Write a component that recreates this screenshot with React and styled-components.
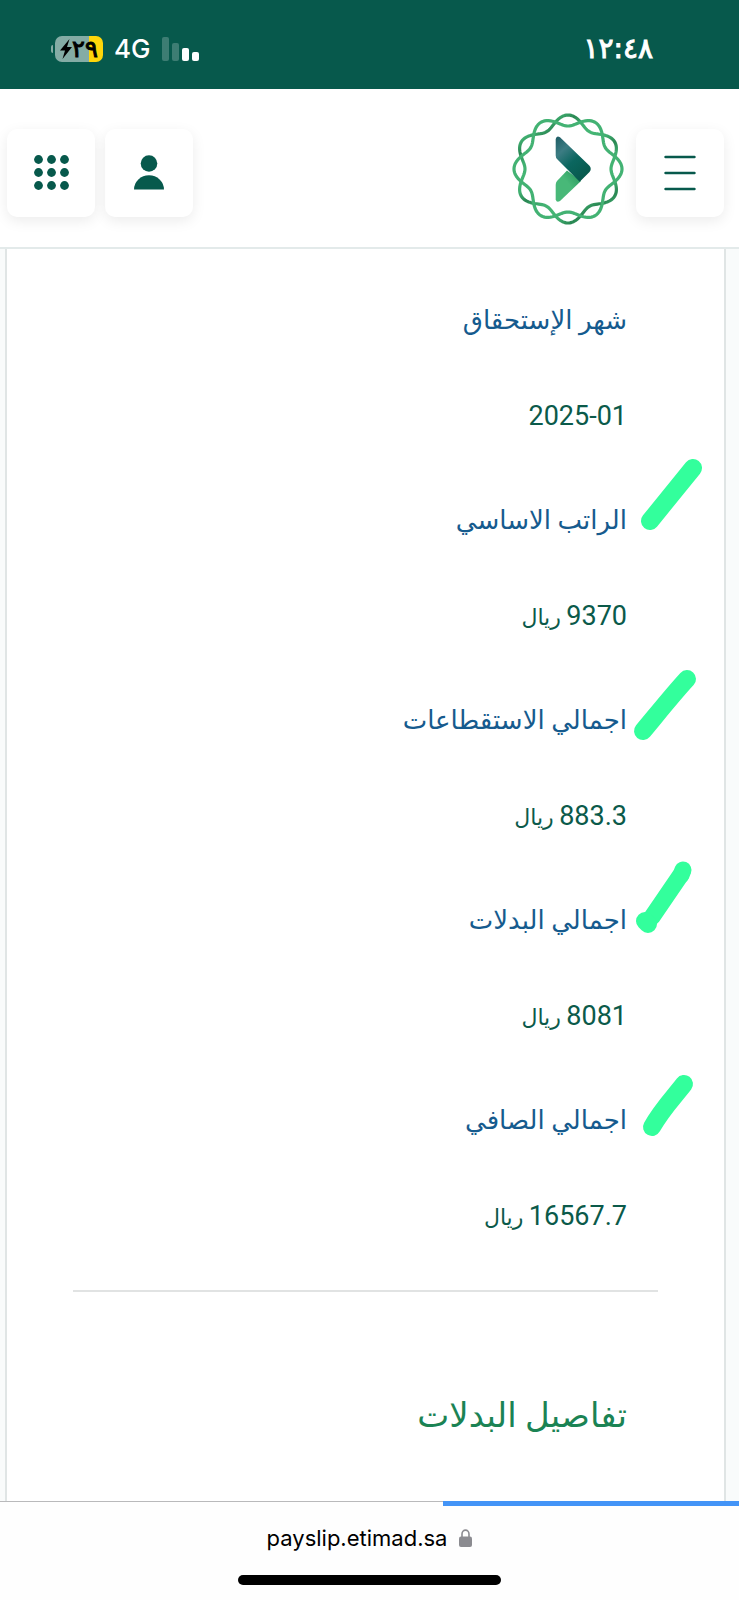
import React from 'react';
import styled, { createGlobalStyle } from 'styled-components';

const GlobalStyle = createGlobalStyle`
  *, *::before, *::after {
    box-sizing: border-box;
  }
  body {
    margin: 0;
    background-color: #f9fbfb;
    font-family: Roboto, 'DejaVu Sans', sans-serif;
  }
`;

const Page = styled.div`
  display: flex;
  flex-direction: column;
  min-height: 100vh;
`;

const StatusBar = styled.div`
  display: flex;
  align-items: center;
  justify-content: space-between;
  direction: ltr;
  height: 89px;
  padding: 9px 86px 0 51px;
  background-color: #07594c;
  color: #fff;
`;

const StatusGroup = styled.div`
  display: flex;
  align-items: center;
  gap: 11px;
`;

const Battery = styled.div`
  display: flex;
  align-items: center;
  gap: 2px;
`;

const BatteryNub = styled.span`
  width: 2px;
  height: 8px;
  border-radius: 2px 0 0 2px;
  background-color: #84aca5;
`;

const BatteryBody = styled.span`
  display: flex;
  align-items: center;
  justify-content: center;
  width: 48px;
  height: 26px;
  border-radius: 7px;
  background: linear-gradient(to left, #ffd60a 30%, #84aca5 30%);
  color: #000;
  font-family: 'DejaVu Sans', sans-serif;
  font-size: 24px;
  line-height: 26px;
  -webkit-text-stroke: 1px #000;
`;

const Network = styled.span`
  font-family: Inter, sans-serif;
  font-size: 26px;
  font-weight: 500;
  line-height: 32px;
`;

const Clock = styled.time`
  font-family: 'DejaVu Sans', sans-serif;
  font-size: 28px;
  line-height: 36px;
  -webkit-text-stroke: 1px #fff;
`;

const Header = styled.header`
  display: flex;
  align-items: flex-end;
  justify-content: space-between;
  height: 160px;
  padding: 0 15px 22px 7px;
  border-bottom: 2px solid #e3eaea;
  background-color: #fff;
`;

const HeaderGroup = styled.div`
  display: flex;
  align-items: flex-end;
  gap: ${(props) => props.$gap || 10}px;
`;

const IconButton = styled.button`
  display: flex;
  align-items: center;
  justify-content: center;
  width: 88px;
  height: 88px;
  margin: 0 0 8px;
  padding: 0 0 1px;
  border: none;
  border-radius: 10px;
  background-color: #fff;
  box-shadow: 0 4px 14px rgba(0, 0, 0, 0.08);
  color: #07594c;
  cursor: pointer;
`;

const LogoLink = styled.a`
  display: block;
  width: 112px;
  height: 112px;
`;

const Card = styled.main`
  flex: 1;
  margin: 0 13px 0 5px;
  padding: 41px 66px 0;
  border: 2px solid #e0e5e5;
  border-width: 0 2px;
  background-color: #fff;
`;

const SummaryList = styled.dl`
  margin: 0;
  padding: 0 31px;
`;

const SummaryRow = styled.div`
  position: relative;
  padding-bottom: 44px;
`;

const Label = styled.dt`
  margin-bottom: 36px;
  color: #165b8e;
  font-size: 26px;
  line-height: 60px;
`;

const Value = styled.dd`
  margin: 0;
  color: #0b5a4a;
  font-size: 27px;
  line-height: 60px;
`;

const Currency = styled.span`
  font-size: 22px;
  line-height: 1;
`;

const Marker = styled.svg`
  position: absolute;
  top: -51px;
  right: -97px;
  width: 98px;
  height: 110px;
  fill: none;
  stroke: #33ff9c;
  stroke-linecap: round;
  stroke-linejoin: round;
`;

const Divider = styled.hr`
  height: 2px;
  margin: 0;
  border: none;
  background-color: #e1e3e3;
`;

const SectionTitle = styled.h2`
  margin: 0;
  padding: 93px 31px 44px;
  color: #1b8354;
  font-size: 34px;
  font-weight: 400;
  line-height: 60px;
`;

const BrowserBar = styled.footer`
  position: relative;
  display: flex;
  flex-direction: column;
  align-items: center;
  height: 99px;
  padding-top: 20px;
  border-top: 1px solid #b9b9bb;
  background-color: #fefefe;
`;

const LoadingBar = styled.div`
  position: absolute;
  top: -1px;
  right: 0;
  height: 5px;
  background-color: #4394f7;
`;

const Address = styled.a`
  display: flex;
  align-items: center;
  gap: 12px;
  direction: ltr;
  color: #000;
  font-family: Inter, sans-serif;
  font-size: 22px;
  line-height: 32px;
  text-decoration: none;
`;

const HomeIndicator = styled.div`
  width: 263px;
  height: 10px;
  margin-top: 21px;
  border-radius: 5px;
  background-color: #000;
`;

const rows = [
  { label: 'شهر الإستحقاق', value: '2025-01' },
  {
    label: 'الراتب الاساسي',
    value: '9370',
    currency: 'ريال',
    strokes: [{ d: 'M67 29 L24 82', width: 18 }],
  },
  {
    label: 'اجمالي الاستقطاعات',
    value: '883.3',
    currency: 'ريال',
    strokes: [{ d: 'M61 40 C48 54 32 74 17 92', width: 18 }],
  },
  {
    label: 'اجمالي البدلات',
    value: '8081',
    currency: 'ريال',
    strokes: [
      { d: 'M57 31 L55 36', width: 17 },
      { d: 'M54 37 L26 78', width: 17 },
      { d: 'M19 82 L22 85', width: 18 },
    ],
  },
  {
    label: 'اجمالي الصافي',
    value: '16567.7',
    currency: 'ريال',
    strokes: [{ d: 'M58 45 C48 58 36 70 26 88', width: 18 }],
  },
];

// one strand of the logo ring, twelve lobes come from two opposite strands
function strandPath(amplitude) {
  const points = [];
  for (let deg = 0; deg < 360; deg += 2) {
    const t = (deg * Math.PI) / 180;
    const r = 48.5 + amplitude * Math.cos(6 * t);
    points.push(`${(60 + r * Math.sin(t)).toFixed(2)} ${(60 - r * Math.cos(t)).toFixed(2)}`);
  }
  return `M${points.join('L')}Z`;
}

function Logo() {
  return (
    <svg width="112" height="112" viewBox="4 4 112 112" aria-hidden="true">
      <defs>
        <linearGradient id="arrowDark" x1="0" y1="0" x2="0.7" y2="1">
          <stop offset="0" stopColor="#1d5b63" />
          <stop offset="0.3" stopColor="#3c7c83" />
          <stop offset="0.6" stopColor="#0b665f" />
          <stop offset="1" stopColor="#07594c" />
        </linearGradient>
        <linearGradient id="arrowLight" x1="1" y1="0.2" x2="0.4" y2="0.8">
          <stop offset="0" stopColor="#2c9a60" />
          <stop offset="0.6" stopColor="#48b878" />
        </linearGradient>
        <linearGradient id="strand" x1="0" y1="0" x2="12" y2="18" gradientUnits="userSpaceOnUse" spreadMethod="reflect">
          <stop offset="0" stopColor="#2a8753" />
          <stop offset="0.5" stopColor="#41b071" />
          <stop offset="1" stopColor="#45b674" />
        </linearGradient>
      </defs>
      <g fill="none" strokeWidth="3.2" strokeLinejoin="round">
        <path d={strandPath(5.5)} stroke="url(#strand)" />
        <path d={strandPath(-5.5)} stroke="#43b273" />
      </g>
      <path
        d="M59 61.5 L49 72 Q47.7 73.5 47.7 76 V90.5 Q48.5 94 52 92 L73 72 Z"
        fill="url(#arrowLight)"
      />
      <path
        d="M47.7 30 Q48.5 26 52 28.2 L81.5 56.8 Q84 60 81.5 63 L71.7 72.7 L49.5 50.5 Q47.7 49 47.7 46.5 Z"
        fill="url(#arrowDark)"
      />
    </svg>
  );
}

function SignalBars() {
  return (
    <svg width="37" height="24" viewBox="0 0 37 24" fill="#fff" aria-hidden="true">
      <rect x="0" y="0" width="7" height="24" rx="2" opacity="0.22" />
      <rect x="10" y="6" width="7" height="18" rx="2" opacity="0.22" />
      <rect x="20" y="11" width="7" height="13" rx="2" />
      <rect x="30" y="15" width="7" height="9" rx="2" />
    </svg>
  );
}

function GridIcon() {
  const stops = [4.5, 17.5, 30.5];
  return (
    <svg width="35" height="35" viewBox="0 0 35 35" fill="currentColor" aria-hidden="true">
      {stops.map((cy) => stops.map((cx) => <circle key={`${cx}-${cy}`} cx={cx} cy={cy} r="4.4" />))}
    </svg>
  );
}

function UserIcon() {
  return (
    <svg width="30" height="35" viewBox="0 0 30 35" fill="currentColor" aria-hidden="true">
      <circle cx="15" cy="8.5" r="8.3" />
      <path d="M0 34.6 A15 14.4 0 0 1 30 34.6 Z" />
    </svg>
  );
}

function MenuIcon() {
  return (
    <svg width="32" height="36" viewBox="0 0 32 36" stroke="currentColor" strokeWidth="2.4" strokeLinecap="round" aria-hidden="true">
      <path d="M1.5 2H30.5M1.5 18H30.5M1.5 34H30.5" />
    </svg>
  );
}

function LockIcon() {
  return (
    <svg width="13" height="18" viewBox="0 0 13 18" aria-hidden="true">
      <path d="M3 9V5a3.5 3.9 0 0 1 7 0v4" fill="none" stroke="#8b8b90" strokeWidth="1.6" />
      <rect x="0" y="7.5" width="13" height="10.5" rx="2" fill="#8b8b90" />
    </svg>
  );
}

function App() {
  return (
    <Page dir="rtl" lang="ar">
      <GlobalStyle />
      <StatusBar>
        <StatusGroup>
          <Battery>
            <BatteryNub />
            <BatteryBody>
              <svg width="12" height="20" viewBox="0 0 12 20" aria-hidden="true">
                <path d="M9.5 0 L0 11.5 H5 L2.5 20 L12 8 H7 Z" fill="#000" />
              </svg>
              ٢٩
            </BatteryBody>
          </Battery>
          <Network>4G</Network>
          <SignalBars />
        </StatusGroup>
        <Clock>١٢:٤٨</Clock>
      </StatusBar>

      <Header>
        <HeaderGroup $gap={12}>
          <IconButton type="button" aria-label="القائمة">
            <MenuIcon />
          </IconButton>
          <LogoLink href="/" aria-label="اعتماد">
            <Logo />
          </LogoLink>
        </HeaderGroup>
        <HeaderGroup>
          <IconButton type="button" aria-label="الحساب">
            <UserIcon />
          </IconButton>
          <IconButton type="button" aria-label="التطبيقات">
            <GridIcon />
          </IconButton>
        </HeaderGroup>
      </Header>

      <Card>
        <SummaryList>
          {rows.map((row) => (
            <SummaryRow key={row.label}>
              <Label>{row.label}</Label>
              <Value>
                {row.value}
                {row.currency && <Currency> {row.currency}</Currency>}
              </Value>
              {row.strokes && (
                <Marker viewBox="0 0 98 110" aria-hidden="true">
                  {row.strokes.map((stroke) => (
                    <path key={stroke.d} d={stroke.d} strokeWidth={stroke.width} />
                  ))}
                </Marker>
              )}
            </SummaryRow>
          ))}
        </SummaryList>
        <Divider />
        <SectionTitle>تفاصيل البدلات</SectionTitle>
      </Card>

      <BrowserBar>
        <LoadingBar style={{ width: '40%' }} />
        <Address href="https://payslip.etimad.sa">
          payslip.etimad.sa
          <LockIcon />
        </Address>
        <HomeIndicator />
      </BrowserBar>
    </Page>
  );
}

export default App;
